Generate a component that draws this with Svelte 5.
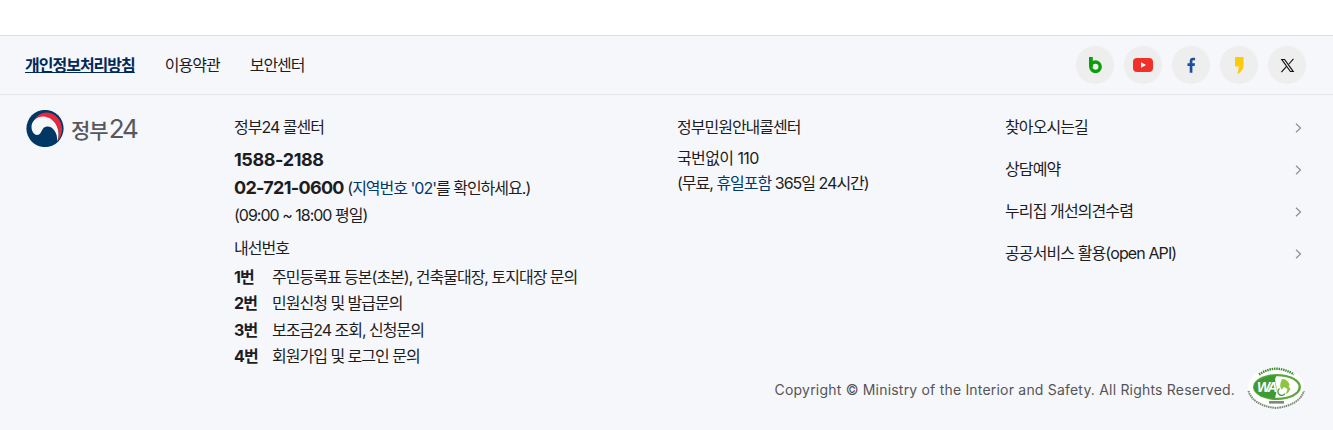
<script>
  const links = ['찾아오시는길', '상담예약', '누리집 개선의견수렴', '공공서비스 활용(open API)'];
  const lines = [
    ['1번', '주민등록표 등본(초본), 건축물대장, 토지대장 문의'],
    ['2번', '민원신청 및 발급문의'],
    ['3번', '보조금24 조회, 신청문의'],
    ['4번', '회원가입 및 로그인 문의']
  ];
</script>

<div class="page">
  <div class="top"></div>
  <footer class="footer">
    <div class="nav">
      <div class="nav-links">
        <a class="strong" href="#a">개인정보처리방침</a>
        <a href="#b">이용약관</a>
        <a href="#c">보안센터</a>
      </div>
      <div class="socials">
        <span class="soc"><svg width="13" height="16" viewBox="0 0 13 16"><rect x="0" y="0" width="3.800" height="10" fill="#0a9e0a"/><circle cx="6.500" cy="9.700" r="4.700" fill="none" stroke="#0a9e0a" stroke-width="3.400"/></svg></span>
        <span class="soc"><svg width="20" height="14" viewBox="0 0 20 14"><rect width="20" height="14" rx="4" fill="#f0302a"/><path d="M8 4.200v5.600l5-2.800z" fill="#fff"/></svg></span>
        <span class="soc"><svg width="9" height="16" viewBox="0 0 10 17"><path d="M3 17V9.500H.5V6.500H3V4.300C3 1.700 4.500.5 6.700.5c1 0 1.900.1 2.300.1v2.700H7.500C6.300 3.300 6 3.900 6 4.800v1.700h2.900l-.4 3H6V17Z" fill="#1d4f9c"/></svg></span>
        <span class="soc"><svg width="9" height="17" viewBox="0 0 9 17"><path d="M0 0H8.500V9C8.500 12 6 15 3 17L2.500 16.500 4 9.500H0Z" fill="#fccc0a"/></svg></span>
        <span class="soc"><svg width="15" height="15" viewBox="0 0 24 24"><path d="M1 1.500h6.800L23 22.500h-6.800Z M4.500 3.300 17.100 20.700h2.300L6.800 3.300Z" fill="#111" fill-rule="evenodd"/><path d="M21.500 1.500 14 10 M10.200 13.800 2.200 22.500" stroke="#111" stroke-width="1.800" fill="none"/></svg></span>
      </div>
    </div>

    <div class="body">
      <div class="logo">
        <svg width="38" height="37" viewBox="0 0 38 37">
          <circle cx="19" cy="18.500" r="18.600" fill="#003764"/>
          <path d="M7 12.500C10 6 15 2.500 20 2.500 29 2.500 36 10 36 19 36 24 34 28.500 31 31.500 33 27 33.500 23 32 19 30 12 24 7 17 7 12.500 7 9 10 7 12.500Z" fill="#e8273f"/>
          <path d="M5.500 17C5.500 11 11 6.500 17 6.500 24 6.500 30 12 31.800 19 33 23 32.800 27.500 31 31.500 31.500 27 30.500 23 28 20 25 16 20.500 15.500 17.500 18 15.500 20 15 25 11 25 8 25 5.500 21 5.500 17Z" fill="#f6f7fb"/>
        </svg>
        <span class="logo-text"><span class="ko">정부</span>24</span>
      </div>

      <div class="col1">
        <div class="title">정부24 콜센터</div>
        <div class="num first">1588-2188</div>
        <div class="num-row"><b class="num">02-721-0600</b> <span class="note">(<span class="blue">지역번호 '02'</span>를 확인하세요.)</span></div>
        <div class="hours">(09:00 ~ 18:00 평일)</div>
        <div class="title ext">내선번호</div>
        <ul class="ext-list">
          {#each lines as [n, t]}
            <li><b>{n}</b><span>{t}</span></li>
          {/each}
        </ul>
      </div>

      <div class="col2">
        <div class="title">정부민원안내콜센터</div>
        <div class="free">국번없이 110</div>
        <div class="free2">(무료, <span class="blue">휴일포함</span> 365일 24시간)</div>
      </div>

      <ul class="col3">
        {#each links as l}
          <li>
            <span>{l}</span>
            <svg width="7" height="10" viewBox="0 0 7 10"><path d="M1 .8 5.500 5 1 9.200" fill="none" stroke="#8a8f96" stroke-width="1.200"/></svg>
          </li>
        {/each}
      </ul>
    </div>

    <div class="copy">
      <span>Copyright © Ministry of the Interior and Safety. All Rights Reserved.</span>
      <svg class="wa" width="60" height="44" viewBox="0 0 60 44">
        <ellipse cx="30" cy="20" rx="28" ry="19" fill="#fff"/>
        <ellipse cx="31" cy="20" rx="24" ry="13" fill="#5aa83c"/>
        <ellipse cx="31" cy="20" rx="21.500" ry="10.800" fill="#fff"/>
        <path d="M8 20C8 14 17 8.500 31 8c-2.500 3-2 6-1 9.500s.5 8-1 14C16 31.500 8 26 8 20Z" fill="#3f9a35"/>
        <text x="11" y="25" class="wa-text">WA</text>
        <path d="M36 12c3 0 5 1 6.500 3.500 1.500 2.500 1 3.500 0 3.500l2 3-3 4.500h-1.500l1.500-4.500-3.500-2-2.500 2.500c-1.500-2-1.500-4-1-6.500Z" fill="#8cc63f"/>
        <path d="M33.500 21.500a3.800 3.800 0 1 0 5.500 5" fill="none" stroke="#3f9a35" stroke-width="1.300"/>
        <path d="M13 7.500Q30 -4 48 7.500" fill="none" stroke="#3b8a30" stroke-width="2.400" stroke-dasharray="1.500 .8"/>
        <rect x="23" y="34" width="15" height="2.600" fill="#7b8a70"/>
        <path d="M2.500 24Q7 38.500 30 41 53 38.500 58 24" fill="none" stroke="#7b8a70" stroke-width="2" stroke-dasharray="1.500 .7"/>
      </svg>
    </div>
  </footer>
</div>

<style>
  :global(body) {
    margin: 0;
    background: #fff;
    font-family: "Inter", "Noto Sans CJK KR", sans-serif;
    color: #1d1d1d;
  }
  .page { width: 1333px; height: 430px; overflow: hidden; }
  .top { height: 35px; background: #fff; }
  .footer { background: #f6f7fb; border-top: 1px solid #dcdddf; height: 394px; }
  .nav {
    height: 58px;
    border-bottom: 1px solid #e3e4e7;
    display: flex;
    align-items: center;
    justify-content: space-between;
    padding: 0 27px 0 25px;
  }
  .nav-links { display: flex; gap: 30px; font-size: 16px; letter-spacing: -1px; padding-bottom: 3px; }
  .nav-links a { color: #1d1d1d; text-decoration: none; }
  .nav-links a.strong { color: #00295a; font-weight: 700; text-decoration: underline; }
  .socials { display: flex; gap: 10px; }
  .soc {
    width: 38px; height: 38px; border-radius: 50%;
    background: #eeeeee;
    display: flex; align-items: center; justify-content: center;
  }
  .body { display: flex; height: 276px; padding-left: 26px; }
  .logo { width: 208px; flex: none; display: flex; align-items: flex-start; gap: 7px; padding-top: 15px; box-sizing: border-box; }
  .logo-text { font-size: 26px; line-height: 37px; color: #55585c; letter-spacing: -2.2px; font-weight: 400; }
  .logo-text .ko { font-size: 21px; font-weight: 500; letter-spacing: -1px; margin-right: 1px; }
  .col1 { width: 443px; flex: none; padding-top: 20px; box-sizing: border-box; font-size: 16px; letter-spacing: -1px; }
  .title { font-size: 16px; line-height: 24px; letter-spacing: -1px; }
  .num { font-size: 18px; font-weight: 700; letter-spacing: -.7px; }
  .first { line-height: 28px; margin-top: 7px; letter-spacing: -.4px; }
  .num-row { line-height: 28px; font-size: 16px; letter-spacing: -1px; }
  .blue { color: #00386e; }
  .hours { line-height: 26px; font-size: 16px; letter-spacing: -1px; }
  .ext { margin-top: 8px; }
  .ext-list { list-style: none; margin: 4px 0 0; padding: 0; }
  .ext-list li { display: flex; line-height: 26.300px; }
  .ext-list b { width: 38px; font-size: 16px; letter-spacing: -.8px; }
  .col2 { width: 329px; flex: none; padding-top: 20px; box-sizing: border-box; }
  .free { margin-top: 6px; font-size: 16px; line-height: 26px; letter-spacing: -.6px; }
  .free2 { font-size: 16px; line-height: 24px; letter-spacing: -1px; }
  .col3 { list-style: none; margin: 0 0 0 -1px; padding: 10px 0 0; width: 297px; box-sizing: border-box; flex: none; }
  .col3 li { height: 42px; display: flex; align-items: center; justify-content: space-between; font-size: 16px; letter-spacing: -.9px; }
  .col3 li svg { margin-top: 4px; }
  .copy {
    display: flex; justify-content: flex-end; align-items: center; gap: 11px;
    padding-right: 27px; height: 36px;
    font-size: 14px; color: #555; letter-spacing: .2px;
  }
  .wa { flex: none; }
  .wa-text { font-size: 14px; font-weight: 700; font-style: italic; fill: #fff; letter-spacing: -2px; font-family: "Liberation Sans", sans-serif; }
</style>
